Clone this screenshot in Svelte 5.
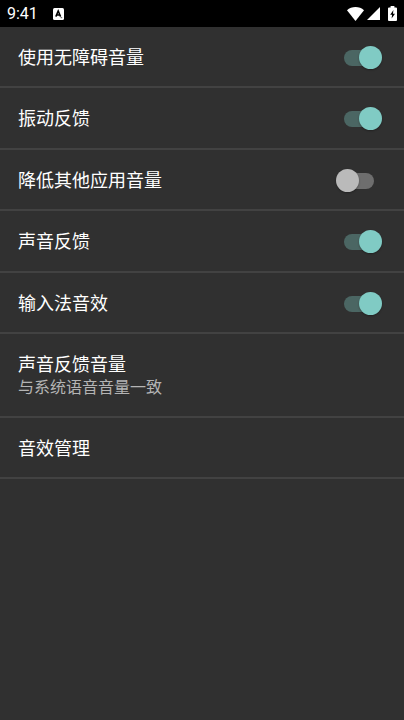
<script>
  let settings = $state([
    { id: 'a11y-volume', title: '使用无障碍音量', on: true },
    { id: 'vibration', title: '振动反馈', on: true },
    { id: 'duck-audio', title: '降低其他应用音量', on: false },
    { id: 'sound', title: '声音反馈', on: true },
    { id: 'ime-sound', title: '输入法音效', on: true }
  ])

  const links = [
    { title: '声音反馈音量', summary: '与系统语音音量一致' },
    { title: '音效管理' }
  ]
</script>

<div class="screen">
  <header class="status">
    <span class="time">9:41</span>
    <svg class="badge" viewBox="0 0 11 12" aria-hidden="true">
      <rect width="11" height="12" rx="1.5" fill="#fff" />
      <path d="M2.8 8.6 5.2 3 7.6 8.6M3.6 6.9H6.8" fill="none" stroke="#000" stroke-width="1.5" />
      <path d="M7.6 9.7h1.6" stroke="#555" stroke-width="1" />
    </svg>
    <div class="sys">
      <svg width="17" height="14" viewBox="0 0 17 14" aria-hidden="true">
        <path d="M0 3.2C4.5-1 12.5-1 17 3.2L8.5 14Z" fill="#fff" />
      </svg>
      <svg class="signal" width="13" height="13" viewBox="0 0 13 13" aria-hidden="true">
        <path d="M13 0V13H0Z" fill="#fff" />
      </svg>
      <svg width="9" height="15" viewBox="0 0 9 15" aria-hidden="true">
        <path d="M2.6 0h3.8v1.6H8q1 0 1 1V14q0 1-1 1H1q-1 0-1-1V2.6q0-1 1-1h1.6Z" fill="#fff" />
        <path d="M5.4 4 2.2 8.7h1.9L3.6 12.4 7 7.7H5Z" fill="#000" />
      </svg>
    </div>
  </header>

  <ul class="list">
    {#each settings as s (s.id)}
      <li>
        <label class="row" for={s.id}>
          <span class="title">{s.title}</span>
          <input class="switch" id={s.id} type="checkbox" role="switch" bind:checked={s.on} />
        </label>
      </li>
    {/each}
    {#each links as l}
      <li>
        <button class="row" type="button">
          <span class="text">
            <span class="title">{l.title}</span>
            {#if l.summary}<span class="summary">{l.summary}</span>{/if}
          </span>
        </button>
      </li>
    {/each}
  </ul>
</div>

<style>
  :global(body) { margin: 0; background: #303030; }
  .screen { min-height: 100vh; background: #303030; color: #fff; font-family: Roboto, 'Noto Sans CJK SC', sans-serif; }

  .status { display: flex; align-items: center; box-sizing: border-box; height: 27px; padding: 0 7px; background: #000; }
  .time { font-size: 16px; line-height: 27px; }
  .badge { width: 11px; height: 12px; margin-left: 15px; }
  .sys { display: flex; align-items: center; margin-left: auto; }
  .signal { margin: 0 8px 0 3px; }

  .list { margin: 0; padding: 0; list-style: none; }
  li { border-bottom: 2px solid #424242; }
  li:nth-child(even) { padding-bottom: 1px; }
  .row { display: flex; align-items: center; justify-content: space-between; box-sizing: border-box; width: 100%; padding: 19px 22px 16px 18px; border: none; background: none; color: inherit; font: inherit; text-align: left; cursor: pointer; }
  .text { display: flex; flex-direction: column; }
  .title { font-size: 18px; line-height: 24px; }
  .summary { color: #b4b4b4; font-size: 16px; line-height: 22px; }

  .switch { display: flex; align-items: center; position: relative; appearance: none; box-sizing: border-box; width: 46px; height: 24px; margin: 0; background: none; cursor: pointer; }
  .switch::before { content: ''; width: 30px; height: 16px; margin-left: 8px; border-radius: 8px; background: #6e6e6e; }
  .switch::after { content: ''; position: absolute; top: 0; left: 0; width: 23px; height: 23px; border-radius: 50%; background: #bababa; box-shadow: 0 1px 2px rgba(0,0,0,.3); transition: left .15s; }
  .switch:checked::before { background: #4b6663; }
  .switch:checked::after { left: 23px; background: #80cbc4; }
</style>
